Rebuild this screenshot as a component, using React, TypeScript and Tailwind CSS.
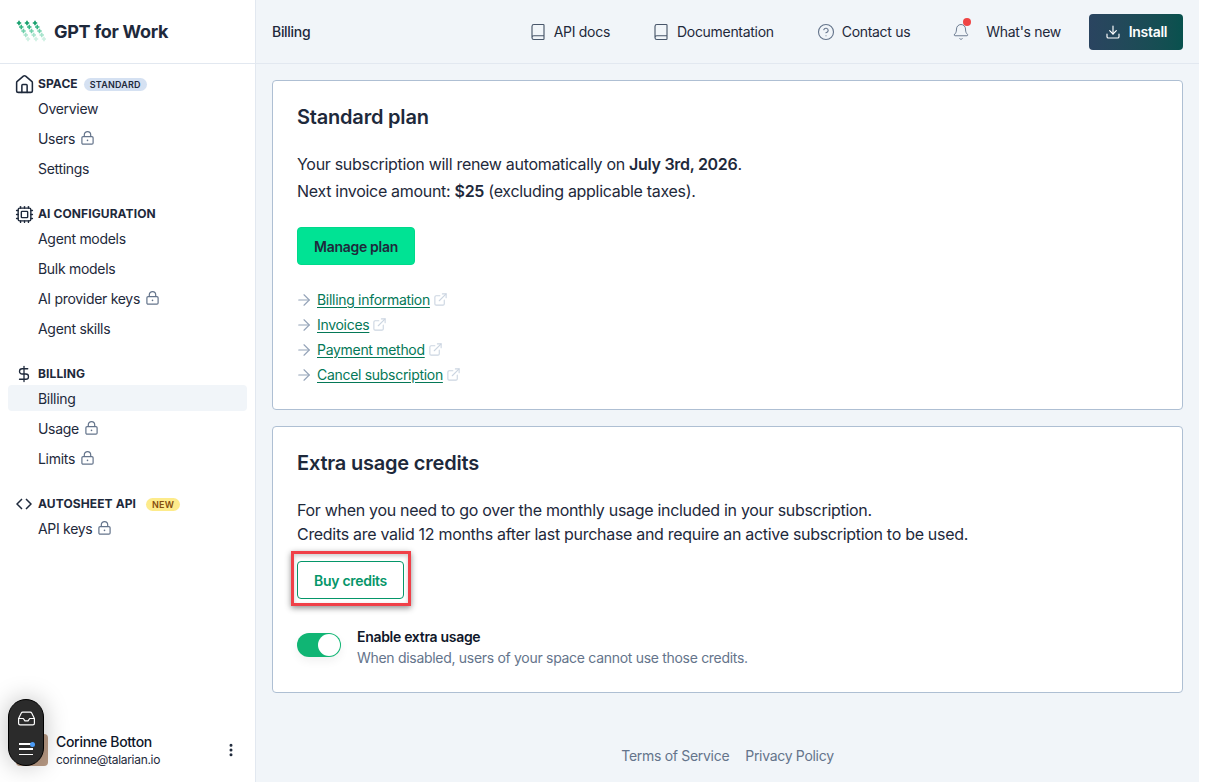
import React from "react";
import { Book, CircleHelp, Bell, Download, House, Cpu, DollarSign, ArrowRight, ExternalLink, EllipsisVertical, Inbox } from "lucide-react";

const F = "font-['Inter',sans-serif]";

function Logo() {
  const cols = [0, 1, 2];
  const rows = [
    ["#0f9d68", 0],
    ["#35b685", 1],
    ["#6fd0ab", 2],
    ["#a5e3cb", 3],
    ["#cdf0e2", 4],
  ] as const;
  return (
    <svg width="30" height="24" viewBox="0 0 30 24" className="shrink-0">
      {cols.map((c) =>
        rows.map(([col, r]) => {
          const x = 3 + c * 8 + r * 2.25;
          const y = 3 + r * 4;
          return <path key={`${c}-${r}`} d={`M${x} ${y - 2.2}v4.4M${x - 2.2} ${y}h4.4`} stroke={col} strokeWidth="1.6" fill="none" />;
        })
      )}
    </svg>
  );
}

function LockIcon() {
  return (
    <svg width="13" height="14" viewBox="0 0 13 14" fill="none" stroke="#64748b" strokeWidth="1.2" className="shrink-0">
      <rect x="0.9" y="5.6" width="11.2" height="7.6" rx="1.2" />
      <path d="M3.3 5.6V3.8a3.2 3.2 0 0 1 6.4 0v1.8" />
      <circle cx="6.5" cy="9.4" r="0.8" fill="#64748b" stroke="none" />
    </svg>
  );
}

function NavItem({ label, lock, active }: { label: string; lock?: boolean; active?: boolean }) {
  return (
    <div className={`mb-1 flex h-[26px] items-center gap-[6px] rounded pl-[30px] text-[14px] text-[#1e293b] ${active ? "bg-[#f1f5f9]" : ""}`}>
      <span>{label}</span>
      {lock && <LockIcon />}
    </div>
  );
}

function Section({ icon, title, badge, children }: { icon: React.ReactNode; title: string; badge?: React.ReactNode; children: React.ReactNode }) {
  return (
    <div className="mb-[23px]">
      <div className="flex h-[20px] items-center">
        <span className="-mr-[2px] flex w-[32px] items-center justify-center text-[#1e293b]">{icon}</span>
        <span className="text-[12px] font-bold tracking-[0.1px] text-[#1e293b]">{title}</span>
        {badge}
      </div>
      <div className="mt-[1px]">{children}</div>
    </div>
  );
}

function TopLink({ icon, label, gap }: { icon: React.ReactNode; label: string; gap: string }) {
  return (
    <div className={`flex items-center text-[14px] text-[#1e293b] ${gap}`}>
      {icon}
      <span>{label}</span>
    </div>
  );
}

function LinkRow({ label }: { label: string }) {
  return (
    <div className="flex h-[25px] items-center">
      <ArrowRight size={18} strokeWidth={1.5} className="-ml-[2px] mr-[4px] text-[#94a3b8]" />
      <a className="text-[14px] text-[#047857] underline underline-offset-2">{label}</a>
      <ExternalLink size={15} strokeWidth={1.75} className="ml-[3px] text-[#cbd5e1]" />
    </div>
  );
}

export default function App() {
  return (
    <div className={`${F} relative flex h-[782px] w-[1214px] overflow-hidden bg-white tracking-[-0.3px]`}>
      <aside className="flex w-[256px] shrink-0 flex-col border-r border-[#e2e8f0] bg-white">
        <div className="flex h-[64px] shrink-0 items-center gap-[8px] border-b border-[#e2e8f0] pl-[16px]">
          <Logo />
          <span className="text-[18px] font-bold tracking-[-0.3px] text-[#1e293b]">GPT for Work</span>
        </div>
        <nav className="flex-1 px-2 pt-[10px]">
          <Section
            icon={<House size={21} strokeWidth={1.75} />}
            title="SPACE"
            badge={<span className="ml-[6px] rounded-full bg-[#d5e1f2] px-[6px] text-[9px] leading-[13px] font-semibold tracking-[0.2px] text-[#1e293b]">STANDARD</span>}
          >
            <NavItem label="Overview" />
            <NavItem label="Users" lock />
            <NavItem label="Settings" />
          </Section>
          <Section icon={<Cpu size={19} strokeWidth={1.75} />} title="AI CONFIGURATION">
            <NavItem label="Agent models" />
            <NavItem label="Bulk models" />
            <NavItem label="AI provider keys" lock />
            <NavItem label="Agent skills" />
          </Section>
          <Section icon={<DollarSign size={18} strokeWidth={1.75} />} title="BILLING">
            <NavItem label="Billing" active />
            <NavItem label="Usage" lock />
            <NavItem label="Limits" lock />
          </Section>
          <Section
            icon={
              <svg width="16" height="12" viewBox="0 0 16 12" fill="none" stroke="currentColor" strokeWidth="1.5">
                <path d="M6 1 1 6l5 5M10 1l5 5-5 5" />
              </svg>
            }
            title="AUTOSHEET API"
            badge={<span className="ml-[10px] rounded-full bg-[#fdeb8b] px-[6px] text-[9px] leading-[13px] font-semibold tracking-[0.2px] text-[#854d0e]">NEW</span>}
          >
            <NavItem label="API keys" lock />
          </Section>
        </nav>
        <div className="flex h-[52px] shrink-0 items-start pl-[16px] pr-[16px]">
          <div className="mr-[8px] mt-[4px] h-[32px] w-[32px] rounded bg-[#b89a84]" />
          <div className="mt-[2px] flex-1">
            <div className="text-[14px] leading-[20px] font-medium text-[#0f172a]">Corinne Botton</div>
            <div className="text-[12px] leading-[15px] text-[#1e293b]">corinne@talarian.io</div>
          </div>
          <EllipsisVertical size={16} strokeWidth={2.5} className="mt-[12px] text-[#1e293b]" />
        </div>
      </aside>

      <main className="mr-[15px] flex min-w-0 flex-1 flex-col bg-[#f1f5f9]">
        <header className="flex h-[64px] shrink-0 items-center justify-between border-b border-[#e2e8f0] px-[16px]">
          <span className="text-[14px] font-medium text-[#1e293b]">Billing</span>
          <div className="flex items-center">
            <TopLink gap="gap-[7px] mr-[42px]" icon={<Book size={18} strokeWidth={1.5} className="text-[#475569]" />} label="API docs" />
            <TopLink gap="gap-[7px] mr-[43px]" icon={<Book size={18} strokeWidth={1.5} className="text-[#475569]" />} label="Documentation" />
            <TopLink gap="gap-[7px] mr-[42px]" icon={<CircleHelp size={18} strokeWidth={1.5} className="text-[#64748b]" />} label="Contact us" />
            <div className="mr-[28px] flex items-center gap-[16px] text-[14px] text-[#1e293b]">
              <span className="relative">
                <Bell size={18} strokeWidth={1.25} className="text-[#64748b]" />
                <span className="absolute -top-[5px] left-[11px] h-[8px] w-[8px] rounded-full bg-[#ef4444]" />
              </span>
              <span>What's new</span>
            </div>
            <button className="flex h-[36px] w-[94px] items-center justify-center gap-[8px] rounded bg-gradient-to-r from-[#2a4460] to-[#08514e] text-[14px] font-semibold text-white">
              <Download size={16} strokeWidth={1.75} />
              Install
            </button>
          </div>
        </header>

        <div className="flex flex-1 flex-col px-[16px] pt-[16px]">
          <section className="h-[330px] rounded border border-[#aebfd3] bg-white px-[24px] pt-[22px]">
            <h2 className="text-[20px] leading-[28px] font-semibold tracking-[-0.2px] text-[#1e293b]">Standard plan</h2>
            <p className="mt-[20px] text-[16px] leading-[27px] text-[#1e293b]">
              Your subscription will renew automatically on <b className="font-semibold">July 3rd, 2026</b>.
              <br />
              Next invoice amount: <b className="font-semibold">$25</b> (excluding applicable taxes).
            </p>
            <button className="mt-[22px] h-[38px] w-[118px] rounded border border-[#00d98b] bg-[#00e394] text-[14px] font-semibold text-[#1e293b]">Manage plan</button>
            <div className="mt-[22px]">
              <LinkRow label="Billing information" />
              <LinkRow label="Invoices" />
              <LinkRow label="Payment method" />
              <LinkRow label="Cancel subscription" />
            </div>
          </section>

          <section className="mt-[16px] h-[267px] rounded border border-[#aebfd3] bg-white px-[24px] pt-[22px]">
            <h2 className="text-[20px] leading-[28px] font-semibold tracking-[-0.2px] text-[#1e293b]">Extra usage credits</h2>
            <p className="mt-[21px] text-[16px] leading-[24px] text-[#1e293b]">
              For when you need to go over the monthly usage included in your subscription.
              <br />
              Credits are valid 12 months after last purchase and require an active subscription to be used.
            </p>
            <div className="relative mt-[15px] h-[38px] w-[107px]">
              <button className="h-full w-full rounded border border-[#059669] bg-white text-[14px] font-semibold text-[#059669]">Buy credits</button>
              <span className="pointer-events-none absolute -bottom-[7px] -left-[6px] -right-[7px] -top-[10px] border-[3px] border-[#f04048] shadow-[0_2px_6px_rgba(0,0,0,0.45),inset_0_2px_4px_rgba(0,0,0,0.2)]" />
            </div>
            <div className="mt-[28px] flex">
              <div className="mt-[6px] flex h-[24px] w-[44px] items-center justify-end rounded-full bg-[#10b574] pr-[1px] shadow-[0_4px_10px_rgba(0,0,0,0.06)]">
                <span className="h-[22px] w-[22px] rounded-full bg-white" />
              </div>
              <div className="ml-[16px]">
                <div className="text-[14px] leading-[20px] font-semibold text-[#0f172a]">Enable extra usage</div>
                <div className="text-[14px] leading-[22px] text-[#64748b]">When disabled, users of your space cannot use those credits.</div>
              </div>
            </div>
          </section>

          <footer className="mt-[52px] flex justify-center gap-[16px] text-[14px] text-[#64748b]">
            <span>Terms of Service</span>
            <span>Privacy Policy</span>
          </footer>
        </div>
      </main>

      <div className="absolute left-[8px] top-[699px] flex h-[67px] w-[36px] flex-col items-center justify-between rounded-[18px] border border-black bg-[#2b2b2b] py-[9px] text-white shadow-[0_0_24px_rgba(0,0,0,0.25)]">
        <Inbox size={19} strokeWidth={1.5} />
        <span className="relative mb-[1px] flex h-[12px] w-[14px] flex-col justify-between">
          <span className="h-[1.5px] w-full bg-white" />
          <span className="h-[1.5px] w-full bg-white" />
          <span className="h-[1.5px] w-full bg-white" />
          <span className="absolute -right-[2px] -top-[1px] h-[5px] w-[5px] rounded-full bg-[#4b9bf5]" />
        </span>
      </div>
    </div>
  );
}
